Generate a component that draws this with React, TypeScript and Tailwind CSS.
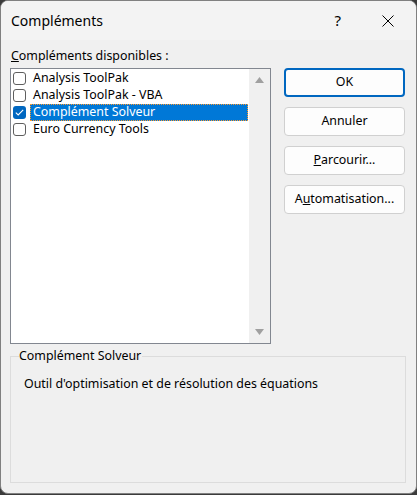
const items = [
  { label: "Analysis ToolPak", checked: false },
  { label: "Analysis ToolPak - VBA", checked: false },
  { label: "Complément Solveur", checked: true, selected: true },
  { label: "Euro Currency Tools", checked: false },
]

function CheckBox({ checked }: { checked: boolean }) {
  if (checked) {
    return (
      <div className="w-[13px] h-[13px] rounded-[3px] bg-[#0067c0] flex items-center justify-center shrink-0">
        <svg width="9" height="7" viewBox="0 0 9 7" fill="none">
          <path d="M0.8 3.6 L3.2 5.9 L8.2 0.9" stroke="white" strokeWidth="1.1" />
        </svg>
      </div>
    )
  }
  return <div className="w-[13px] h-[13px] rounded-[3px] border border-[#5f5f5f] bg-white shrink-0" />
}

function Btn({ children, primary }: { children: React.ReactNode; primary?: boolean }) {
  return (
    <button
      className={
        "w-[121px] h-[29px] rounded-[4px] bg-[#fdfdfd] text-[12.4px] text-black flex items-center justify-center " +
        (primary ? "border-2 border-[#0067c0]" : "border border-[#d0d0d0]")
      }
    >
      {children}
    </button>
  )
}

export default function App() {
  return (
    <div className="w-[417px] h-[495px] bg-[#3b3b3b] font-['Segoe_UI','Noto_Sans',sans-serif]">
      <div className="w-[417px] h-[494px] rounded-[8px] border border-[#808080] bg-[#f0f0f0] overflow-hidden flex flex-col">
        {/* title bar */}
        <div className="h-[39px] bg-[#f3f3f3] flex items-center pl-[10px] shrink-0">
          <span className="text-[14px] text-black">Compléments</span>
          <span className="ml-auto text-[15px] text-black mr-[41px]">?</span>
          <svg width="12" height="12" viewBox="0 0 12 12" className="mr-[22px]">
            <path d="M0.5 0.5 L11.5 11.5 M11.5 0.5 L0.5 11.5" stroke="black" strokeWidth="1" />
          </svg>
        </div>

        <div className="flex-1 px-[9px] text-[12.4px] text-black">
          <div className="flex">
            <div className="w-[261px]">
              <div className="h-[28px] flex items-end pb-[2px] pl-[1px]">
                <span>
                  <span className="underline">C</span>ompléments disponibles :
                </span>
              </div>
              {/* listbox */}
              <div className="h-[276px] border border-[#828790] bg-white flex">
                <div className="flex-1 pt-[1px] pl-[2px]">
                  {items.map((it) => (
                    <div key={it.label} className="h-[17px] flex items-center">
                      <div className="w-[17px] flex items-center">
                        <CheckBox checked={it.checked} />
                      </div>
                      {it.selected ? (
                        <div className="h-[17px] flex-1 mr-[1px] bg-[#0078d7] text-white flex items-center pl-[3px] outline-1 outline-dotted outline-[#ff9a2e] -outline-offset-1">
                          {it.label}
                        </div>
                      ) : (
                        <div className="pl-[3px]">{it.label}</div>
                      )}
                    </div>
                  ))}
                </div>
                <div className="w-[21px] bg-[#f0f0f0] flex flex-col items-center justify-between py-[8px]">
                  <svg width="9" height="6" viewBox="0 0 9 6">
                    <path d="M4.5 0 L9 6 L0 6 Z" fill="#a0a0a0" />
                  </svg>
                  <svg width="9" height="6" viewBox="0 0 9 6">
                    <path d="M0 0 L9 0 L4.5 6 Z" fill="#a0a0a0" />
                  </svg>
                </div>
              </div>
            </div>
            <div className="ml-[13px] pt-[28px] flex flex-col gap-[10px]">
              <Btn primary>OK</Btn>
              <Btn>Annuler</Btn>
              <Btn>
                <span>
                  <span className="underline">P</span>arcourir...
                </span>
              </Btn>
              <Btn>
                <span>
                  A<span className="underline">u</span>tomatisation...
                </span>
              </Btn>
            </div>
          </div>

          {/* group box */}
          <div className="relative mt-[12px] h-[127px] border border-[#dcdcdc] w-[396px]">
            <span className="absolute -top-[9px] left-[8px] bg-[#f0f0f0] pr-[1px] leading-[16px]">
              Complément Solveur
            </span>
            <div className="pt-[18px] pl-[13px]">Outil d'optimisation et de résolution des équations</div>
          </div>
        </div>
      </div>
    </div>
  )
}
